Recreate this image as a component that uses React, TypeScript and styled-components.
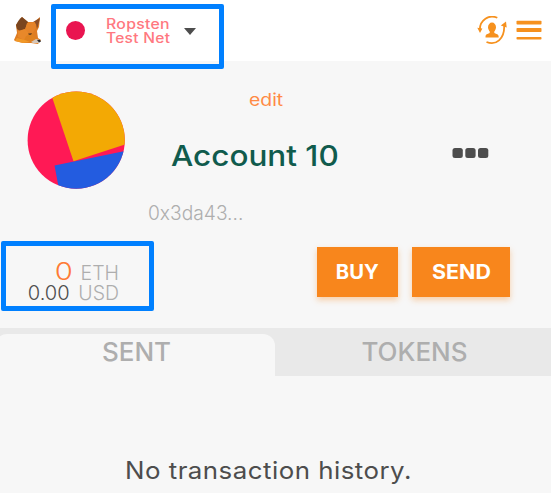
import React from "react";
import styled, { createGlobalStyle } from "styled-components";

const GlobalStyle = createGlobalStyle`
  * { box-sizing: border-box; }
  body { margin: 0; background: #f7f7f7; overflow: hidden; }
`;

const Page = styled.div`
  width: 551px;
  height: 493px;
  overflow: hidden;
  background: #f7f7f7;
  font-family: "Inter", sans-serif;
  color: #4d4d4d;
`;

const Header = styled.header`
  position: relative;
  display: flex;
  align-items: flex-start;
  height: 61px;
  padding: 16px 9px 0 14px;
  background: #fff;
`;

const NetworkButton = styled.div`
  display: flex;
  align-items: flex-start;
  margin-left: 24px;
`;

const NetworkDot = styled.span`
  width: 19px;
  height: 19px;
  margin-top: 5px;
  border-radius: 50%;
  background: #e91550;
`;

interface TextProps {
  $size: number;
  $line: number;
  $spacing?: number;
  $stretch?: number;
  $origin?: string;
  $weight?: number;
  $color?: string;
}

const Text = styled.div<TextProps>`
  font-size: ${(p) => p.$size}px;
  line-height: ${(p) => p.$line}px;
  letter-spacing: ${(p) => p.$spacing ?? 0}px;
  font-weight: ${(p) => p.$weight ?? 400};
  color: ${(p) => p.$color ?? "inherit"};
  transform: scaleX(${(p) => p.$stretch ?? 1});
  transform-origin: ${(p) => p.$origin ?? "left"};
  white-space: nowrap;
`;

const NetworkName = styled.div`
  width: 66px;
  margin: 1px 0 0 21px;
`;

const Caret = styled.span`
  margin: 12px 0 0 12px;
  border: 6px solid transparent;
  border-top: 7px solid #4d4d4d;
  border-bottom: 0;
`;

const HeaderActions = styled.div`
  display: flex;
  gap: 9px;
  margin: 0 0 0 auto;
`;

const Highlight = styled.div<{ $x: number; $y: number; $w: number; $h: number }>`
  position: absolute;
  z-index: 2;
  left: ${(p) => p.$x}px;
  top: ${(p) => p.$y}px;
  width: ${(p) => p.$w}px;
  height: ${(p) => p.$h}px;
  border: 5px solid #0080ff;
  border-radius: 2px;
`;

const Account = styled.section`
  display: flex;
  height: 180px;
  padding: 29px 61px 0 27px;
`;

const AvatarFrame = styled.div`
  width: 99px;
  padding-top: 1px;
`;

const Identity = styled.div`
  width: 230px;
  margin-left: 22px;
`;

const Edit = styled(Text)`
  margin-left: 101px;
`;

const Name = styled(Text)`
  margin: 28px 0 0 23px;
`;

const Address = styled(Text)`
  margin-top: 27px;
`;

const MoreButton = styled.div`
  height: 12px;
  margin: 57px 0 0 auto;
  line-height: 0;
`;

const Funds = styled.section`
  position: relative;
  display: flex;
  height: 87px;
`;

const Balance = styled.div`
  width: 119px;
  padding-top: 21px;
`;

const Amount = styled.div`
  display: flex;
  justify-content: flex-end;
  align-items: baseline;
  height: 21px;
`;

const Unit = styled(Text)<{ $width: number }>`
  width: ${(p) => p.$width}px;
  text-align: right;
`;

const Actions = styled.div`
  display: flex;
  gap: 14px;
  margin: 6px 0 0 198px;
`;

const Action = styled.button<{ $width: number }>`
  display: flex;
  justify-content: center;
  width: ${(p) => p.$width}px;
  height: 50px;
  padding: 0;
  border: 0;
  background: #f8861c;
  box-shadow: 0 3px 6px rgba(247, 134, 28, 0.36);
  color: #fff;
  font-family: inherit;
`;

const Tabs = styled.nav`
  display: flex;
  height: 48px;
  padding-top: 6px;
  background: #e9e9e9;
`;

const Tab = styled.div<{ $active?: boolean }>`
  width: 280px;
  flex: none;
  margin-left: ${(p) => (p.$active ? -5 : 0)}px;
  padding: ${(p) => (p.$active ? "2px 0 0 3px" : "2px 1px 0 0")};
  border-radius: 12px 12px 0 0;
  background: ${(p) => (p.$active ? "#f7f7f7" : "transparent")};
  text-align: center;
`;

const Empty = styled.div`
  padding: 80px 0 0 125px;
`;

const Fox = () => (
  <svg width="28" height="30" viewBox="0 0 28 30">
    <path d="M2 9 8 1l6 5h6l6-5-1 10-2 4 1 7 3 2-3 4-7-1-8 0-8-2-1-1 3-7z" fill="#df7d23" />
    <path d="M2 9Q5 3 8 1l6 5-3 7-5 2-3-2z" fill="#7a451f" />
    <path d="m19 6 7-4-2 8-1 3-1-5z" fill="#8d4e25" />
    <path d="m13 7 8-1 1 6-4 6-7-4z" fill="#e58329" />
    <path d="m4 15 7-2 6 6-5 6-8-4z" fill="#e8882a" />
    <path d="m12 20 6-3 4 6-6 3-7 0z" fill="#df811f" />
    <path d="m1 25 2-3 8 2 5 2-7 1z" fill="#f19828" />
    <path d="m17 26 5-3 4 1-1 3-6 0z" fill="#d4c7bb" />
    <path d="m23 24 3-.3 1 1.7-2 1z" fill="#282b31" />
    <path d="m14 17.5 4-.5-1 2-2 0z" fill="#70461f" />
  </svg>
);

const SwitchAccount = () => (
  <svg width="30" height="30" viewBox="0 0 30 30" fill="none" stroke="#f6911e" strokeWidth="1.8">
    <path d="M20.3 1.8C12-2 2.8 4 2.8 13.5" />
    <path d="M9.5 26C19 30 27.5 23 27.2 10" />
    <path d="M.3 11.8 5.4 12.6 3 17zM23.8 9.4l5.2-4 .7 6z" fill="#f6911e" stroke="none" />
    <ellipse cx="15" cy="11.3" rx="4" ry="4.8" fill="#f6911e" stroke="none" />
    <path d="M12.7 14h4.600v3l3.400 1.500q1.200 1 1 2.900H8.500q-.3-2 .8-2.900L12.700 17z" fill="#f6911e" stroke="none" />
  </svg>
);

const Menu = () => (
  <svg width="26" height="30" viewBox="0 0 26 30" fill="#f6911e">
    <rect x=".5" y="4.8" width="25" height="3.8" rx=".8" />
    <rect x=".5" y="12" width="25" height="4" rx=".8" />
    <rect x=".5" y="21" width="25" height="2.6" rx=".8" />
  </svg>
);

const Identicon = () => (
  <svg width="99" height="99" viewBox="27 91 99 99">
    <defs>
      <clipPath id="round"><circle cx="76.2" cy="140.2" r="48.6" /></clipPath>
    </defs>
    <g clipPath="url(#round)">
      <rect x="27" y="91" width="99" height="99" fill="#ff1955" />
      <path d="M49 88 73.5 161.3 130 143V85z" fill="#f3a904" />
      <path d="M54.5 165.6 130 150v50H61z" fill="#235ce0" />
    </g>
  </svg>
);

const MoreDots = () => (
  <svg width="38" height="12" viewBox="0 0 38 12" fill="#4d4d4d">
    <rect x=".5" y="1" width="10.3" height="10" rx="2.5" />
    <rect x="13.3" y="1" width="10.3" height="10" rx="2.5" />
    <rect x="26" y="1" width="10.3" height="10" rx="2.5" />
  </svg>
);

export default function App() {
  return (
    <Page>
      <GlobalStyle />
      <Header>
        <Fox />
        <NetworkButton>
          <NetworkDot />
          <NetworkName>
            <Text $size={14} $line={14} $spacing={0.25} $stretch={1.13} $weight={500} $color="#ff7880">Ropsten</Text>
            <Text $size={14} $line={14} $spacing={0.25} $stretch={1.11} $weight={500} $color="#ff7880">Test Net</Text>
          </NetworkName>
          <Caret />
        </NetworkButton>
        <HeaderActions>
          <SwitchAccount />
          <Menu />
        </HeaderActions>
        <Highlight $x={51} $y={4} $w={173} $h={65} />
      </Header>

      <Account>
        <AvatarFrame><Identicon /></AvatarFrame>
        <Identity>
          <Edit $size={17} $line={20} $stretch={1.14} $color="#ff8a45">edit</Edit>
          <Name $size={29} $line={36} $stretch={1.085} $weight={500} $color="#105b4d">Account 10</Name>
          <Address $size={19.5} $line={24} $stretch={0.985} $weight={300} $color="#aeaeae">0x3da43...</Address>
        </Identity>
        <MoreButton><MoreDots /></MoreButton>
      </Account>

      <Funds>
        <Balance>
          <Amount>
            <Text $size={24} $line={20} $weight={300} $stretch={1.22} $origin="right" $color="#ff7a35">0</Text>
            <Unit $width={46} $size={19.5} $line={20} $weight={300} $color="#aeaeae">ETH</Unit>
          </Amount>
          <Amount>
            <Text $size={19.5} $line={20} $weight={300} $stretch={1.03} $origin="right">0.00</Text>
            <Unit $width={49} $size={19.5} $line={20} $weight={300} $color="#aeaeae">USD</Unit>
          </Amount>
        </Balance>
        <Actions>
          <Action $width={81}>
            <Text $size={20} $line={50} $weight={700} $stretch={1.01} $origin="center">BUY</Text>
          </Action>
          <Action $width={98}>
            <Text $size={20} $line={50} $weight={700} $stretch={1.07} $origin="center">SEND</Text>
          </Action>
        </Actions>
        <Highlight $x={1} $y={0} $w={153} $h={70} />
      </Funds>

      <Tabs>
        <Tab $active>
          <Text $size={25} $line={32} $weight={500} $stretch={1.04} $origin="center" $color="#aeaeae">SENT</Text>
        </Tab>
        <Tab>
          <Text $size={25} $line={32} $weight={500} $stretch={1.04} $origin="center" $color="#aeaeae">TOKENS</Text>
        </Tab>
      </Tabs>
      <Empty>
        <Text $size={24} $line={30} $spacing={0.45} $stretch={1.077}>No transaction history.</Text>
      </Empty>
    </Page>
  );
}
